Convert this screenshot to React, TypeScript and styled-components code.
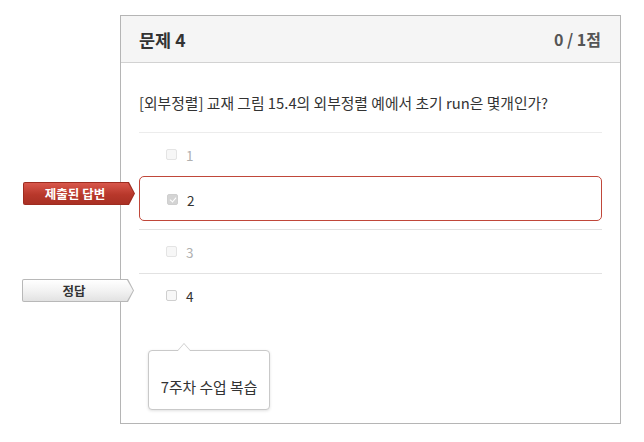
import React from "react";
import styled, { createGlobalStyle, css } from "styled-components";

const GlobalStyle = createGlobalStyle`
  html, body {
    margin: 0;
    padding: 0;
    background: #fff;
  }
  body {
    font-family: "Noto Sans CJK KR", "Noto Sans", "Liberation Sans", sans-serif;
    color: #333;
  }
`;

const Page = styled.div`
  padding: 15px 0 0 120px;
`;

const Card = styled.section`
  box-sizing: border-box;
  width: 501px;
  height: 409px;
  border: 1px solid #b5b5b5;
  background: #fff;
`;

const Header = styled.header`
  display: flex;
  align-items: center;
  justify-content: space-between;
  height: 46px;
  padding: 0 19px 0 18px;
  background: #f5f5f5;
  border-bottom: 1px solid #d2d2d2;
`;

const Title = styled.h2`
  margin: 0;
  font-size: 17.5px;
  font-weight: 700;
  color: #333;
`;

const Score = styled.span`
  font-size: 16px;
  font-weight: 700;
  color: #555;
`;

const Body = styled.div`
  padding: 0 18px;
`;

const Question = styled.p`
  margin: 0;
  padding: 30px 0 19px;
  font-size: 14.8px;
  line-height: 20px;
  color: #333;
`;

const OptionList = styled.ul`
  list-style: none;
  margin: 0;
  padding: 0;
  border-top: 1px solid #ececec;
`;

const Option = styled.li<{ $submitted?: boolean; $divider?: boolean }>`
  position: relative;
  display: flex;
  align-items: center;
  gap: 9px;
  box-sizing: border-box;
  height: 43px;
  padding-left: 27px;

  ${(p) =>
    p.$divider &&
    css`
      height: 44px;
      border-top: 1px solid #e2e2e2;
    `}

  ${(p) =>
    p.$submitted &&
    css`
      height: 45px;
      margin-bottom: 8px;
      padding-top: 2px;
      border: 1px solid #c0473a;
      border-radius: 5px;
    `}
`;

const Box = styled.span<{ $checked?: boolean; $faded?: boolean }>`
  position: relative;
  box-sizing: border-box;
  width: 11px;
  height: 11px;
  border-radius: 2px;
  border: 1px solid ${(p) => (p.$faded ? "#e4e4e4" : "#cfcfcf")};
  background: ${(p) => (p.$checked ? "#d4d4d4" : "#f7f7f7")};

  ${(p) =>
    p.$checked &&
    css`
      &::after {
        content: "";
        position: absolute;
        left: 3px;
        top: 1px;
        width: 3px;
        height: 5px;
        border: solid #fff;
        border-width: 0 1.5px 1.5px 0;
        transform: rotate(40deg);
      }
    `}
`;

const Label = styled.span<{ $faded?: boolean }>`
  font-size: 13.5px;
  color: ${(p) => (p.$faded ? "#b0b0b0" : "#333")};
`;

/* Arrow-shaped markers sitting in the margin left of the card */
const arrow = "polygon(0 0, calc(100% - 6px) 0, 100% 50%, calc(100% - 6px) 100%, 0 100%)";

const Marker = styled.span<{ $tone: "red" | "gray" }>`
  position: absolute;
  left: -117px;
  top: 5px;
  width: 112px;
  height: 23px;
  padding: 1px;
  box-sizing: border-box;
  clip-path: ${arrow};
  border-radius: 2px;
  background: ${(p) => (p.$tone === "red" ? "#9e2c20" : "#b8b8b8")};
`;

const MarkerFace = styled.span<{ $tone: "red" | "gray" }>`
  display: flex;
  align-items: center;
  justify-content: center;
  height: 100%;
  padding-right: 8px;
  clip-path: ${arrow};
  border-radius: 1px;
  font-size: 12.5px;
  font-weight: 700;
  ${(p) =>
    p.$tone === "red"
      ? css`
          color: #fff;
          background: linear-gradient(#d8574b, #b8382b 55%, #a93024);
        `
      : css`
          color: #333;
          background: linear-gradient(#ffffff, #f1f1f1 55%, #e2e2e2);
        `}
`;

const Tip = styled.div`
  position: relative;
  box-sizing: border-box;
  width: 122px;
  height: 60px;
  margin: 33px 0 0 9px;
  padding-top: 25px;
  border: 1px solid #c9c9c9;
  border-radius: 4px;
  background: #fff;
  box-shadow: 0 1px 3px rgba(0, 0, 0, 0.12);
  text-align: center;
  font-size: 14.8px;
  color: #333;

  &::before,
  &::after {
    content: "";
    position: absolute;
    left: 28px;
    width: 0;
    height: 0;
    border: 7px solid transparent;
    border-top: 0;
  }
  &::before {
    top: -8px;
    border-bottom: 8px solid #c9c9c9;
  }
  &::after {
    top: -7px;
    border-bottom: 8px solid #fff;
  }
`;

type Choice = {
  n: number;
  submitted?: boolean;
  correct?: boolean;
};

const choices: Choice[] = [
  { n: 1 },
  { n: 2, submitted: true },
  { n: 3 },
  { n: 4, correct: true },
];

export default function App() {
  return (
    <Page>
      <GlobalStyle />
      <Card>
        <Header>
          <Title>문제 4</Title>
          <Score>0 / 1점</Score>
        </Header>
        <Body>
          <Question>
            [외부정렬] 교재 그림 15.4의 외부정렬 예에서 초기 run은 몇개인가?
          </Question>
          <OptionList>
            {choices.map((c, i) => {
              const faded = !c.submitted && !c.correct;
              return (
                <Option key={c.n} $submitted={c.submitted} $divider={i >= 2}>
                  {c.submitted && (
                    <Marker $tone="red">
                      <MarkerFace $tone="red">제출된 답변</MarkerFace>
                    </Marker>
                  )}
                  {c.correct && (
                    <Marker $tone="gray">
                      <MarkerFace $tone="gray">정답</MarkerFace>
                    </Marker>
                  )}
                  <Box $checked={c.submitted} $faded={faded} />
                  <Label $faded={faded}>{c.n}</Label>
                </Option>
              );
            })}
          </OptionList>
          <Tip>7주차 수업 복습</Tip>
        </Body>
      </Card>
    </Page>
  );
}
